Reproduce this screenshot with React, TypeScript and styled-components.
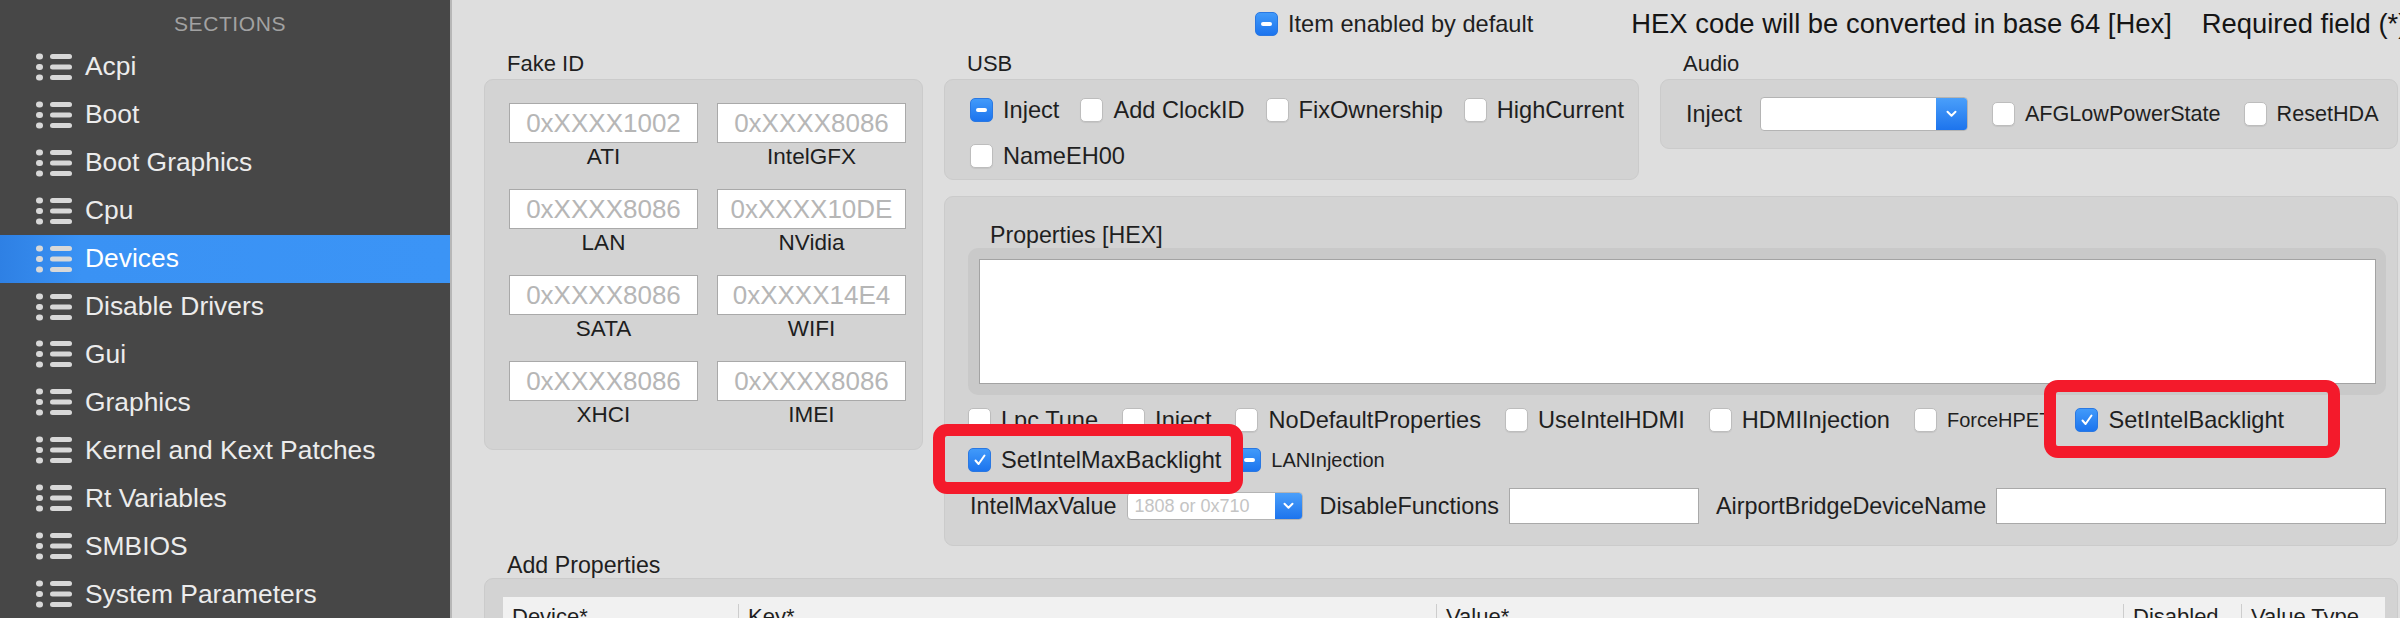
import React from "react";
import styled, { createGlobalStyle, css } from "styled-components";

const Global = createGlobalStyle`
  html, body { margin: 0; padding: 0; width: 2400px; height: 618px; overflow: hidden; }
  body { font-family: "Liberation Sans", Arial, sans-serif; background: #dedede; color: #1f1f1f; }
  #root { width: 2400px; height: 618px; }
  * { box-sizing: border-box; }
`;

const Window = styled.div`
  display: flex;
  width: 2400px;
  height: 618px;
  overflow: hidden;
`;

/* ---------- Sidebar ---------- */
const Sidebar = styled.nav`
  flex: 0 0 452px;
  background: #474747;
  border-right: 2px solid #b7b7b7;
  display: flex;
  flex-direction: column;
`;

const SidebarHeader = styled.div`
  height: 43px;
  padding: 5px 0 0 10px;
  display: flex;
  align-items: center;
  justify-content: center;
  font-size: 21px;
  letter-spacing: 0.6px;
  color: #a2a2a2;
`;

const SidebarItem = styled.div<{ $active?: boolean }>`
  height: 48px;
  display: flex;
  align-items: center;
  gap: 13px;
  padding-left: 36px;
  font-size: 26.4px;
  color: #ececec;
  white-space: nowrap;
  ${({ $active }) =>
    $active &&
    css`
      background: linear-gradient(90deg, #2e80e4 0%, #3a92f4 18%, #3b94f6 100%);
      color: #ffffff;
    `}
`;

const ListIcon = () => (
  <svg width="36" height="28" viewBox="0 0 36 28" fill="#d8d8d8">
    <rect x="0" y="0.5" width="7" height="6" rx="3" />
    <rect x="0" y="11" width="7" height="6" rx="3" />
    <rect x="0" y="21.5" width="7" height="6" rx="3" />
    <rect x="14" y="1" width="22" height="5" rx="2.5" />
    <rect x="14" y="11.5" width="22" height="5" rx="2.5" />
    <rect x="14" y="22" width="22" height="5" rx="2.5" />
  </svg>
);

/* ---------- Main ---------- */
const Main = styled.main`
  flex: 1 1 auto;
  min-width: 0;
  display: flex;
  flex-direction: column;
  overflow: hidden;
  background: #dedede;
`;

const TopBar = styled.div`
  height: 48px;
  flex: 0 0 48px;
  display: flex;
  align-items: center;
  padding-left: 803px;
  white-space: nowrap;
`;

const Note = styled.span<{ $gap: number }>`
  margin-left: ${({ $gap }) => $gap}px;
  font-size: 27.4px;
  color: #151515;
`;

const Content = styled.div`
  display: grid;
  grid-template-columns: 439px 1fr;
  column-gap: 21px;
  padding: 0 2px 0 32px;
`;

const Group = styled.section<{ $basis?: number }>`
  display: flex;
  flex-direction: column;
  min-width: 0;
  ${({ $basis }) =>
    $basis
      ? css`
          flex: 0 0 ${$basis}px;
        `
      : css`
          flex: 1 1 0;
        `}
`;

const GroupTitle = styled.div`
  height: 31px;
  line-height: 31px;
  padding-left: 23px;
  font-size: 22px;
  color: #1f1f1f;
`;

const Panel = styled.div`
  background: #d3d3d3;
  border: 1px solid #cbcbcb;
  border-radius: 9px;
`;

/* Fake ID */
const FakeGrid = styled(Panel)`
  height: 371px;
  padding: 23px 0 0 24px;
  display: grid;
  grid-template-columns: 189px 189px;
  grid-auto-rows: 68px;
  column-gap: 19px;
  row-gap: 18px;
`;

const FakeCell = styled.div`
  display: flex;
  flex-direction: column;
  align-items: center;
`;

const HexField = styled.div`
  width: 189px;
  height: 40px;
  background: #ffffff;
  border: 1px solid #a9a9a9;
  display: flex;
  align-items: center;
  justify-content: center;
  font-size: 26px;
  color: #b6b6b6;
`;

const FieldCaption = styled.div`
  line-height: 28px;
  font-size: 22.5px;
  color: #1e1e1e;
`;

/* Right column */
const RightCol = styled.div`
  display: flex;
  flex-direction: column;
  min-width: 0;
`;

const TopGroups = styled.div`
  display: flex;
  gap: 21px;
`;

const UsbPanel = styled(Panel)`
  height: 101px;
  padding: 18px 0 0 25px;
  display: flex;
  flex-direction: column;
  gap: 22px;
`;

const AudioPanel = styled(Panel)`
  height: 70px;
  padding-left: 25px;
  display: flex;
  align-items: center;
  white-space: nowrap;
  overflow: hidden;
`;

const Row = styled.div<{ $gap: number; $top?: number; $h?: number; $ml?: number }>`
  display: flex;
  align-items: center;
  gap: ${({ $gap }) => $gap}px;
  margin-top: ${({ $top }) => $top ?? 0}px;
  margin-left: ${({ $ml }) => $ml ?? 0}px;
  height: ${({ $h }) => $h ?? 24}px;
  white-space: nowrap;
`;

const PropsPanel = styled(Panel)`
  margin-top: 16px;
  height: 350px;
  padding: 0 11px 0 23px;
  display: flex;
  flex-direction: column;
`;

const PropsTitle = styled.div`
  padding: 25px 0 0 22px;
  line-height: 26px;
  font-size: 23.2px;
  color: #1f1f1f;
`;

const HexFrame = styled.div`
  height: 147px;
  background: #c9c9c9;
  border-radius: 10px;
  padding: 11px 10px 11px 11px;
`;

const HexArea = styled.div`
  width: 100%;
  height: 100%;
  background: #ffffff;
  border: 1px solid #a3a3a3;
`;

/* Check boxes */
type CheckState = "off" | "on" | "mixed";

const Box = styled.span<{ $state: CheckState }>`
  flex: 0 0 auto;
  width: 23px;
  height: 24px;
  border-radius: 5px;
  display: inline-flex;
  align-items: center;
  justify-content: center;
  ${({ $state }) =>
    $state === "off"
      ? css`
          background: #ffffff;
          border: 1px solid #bdbdbd;
          box-shadow: 0 1px 1px rgba(0, 0, 0, 0.07);
        `
      : css`
          background: linear-gradient(#419afa, #1c74ee);
          border: 1px solid #2a78e2;
        `}
`;

const Dash = styled.span`
  width: 11px;
  height: 4px;
  border-radius: 2px;
  background: #ffffff;
`;

const CheckLabel = styled.label<{ $size?: number }>`
  position: relative;
  display: inline-flex;
  align-items: center;
  gap: 10px;
  font-size: ${({ $size }) => $size ?? 23.6}px;
  color: #1f1f1f;
  white-space: nowrap;
`;

const RedMark = styled.span<{ $l: number; $t: number; $w: number; $h: number }>`
  position: absolute;
  left: ${({ $l }) => $l}px;
  top: ${({ $t }) => $t}px;
  width: ${({ $w }) => $w}px;
  height: ${({ $h }) => $h}px;
  border: 12px solid #f41a2b;
  border-radius: 14px;
  z-index: 5;
  pointer-events: none;
`;

const Check = ({
  state = "off",
  children,
  size,
  mark,
}: {
  state?: CheckState;
  children: React.ReactNode;
  size?: number;
  mark?: { l: number; t: number; w: number; h: number };
}) => (
  <CheckLabel $size={size}>
    <Box $state={state}>
      {state === "mixed" && <Dash />}
      {state === "on" && (
        <svg width="14" height="14" viewBox="0 0 14 14">
          <path d="M2.5 7.5 L5.6 11 L11.5 2.5" stroke="#fff" strokeWidth="2" fill="none" strokeLinecap="round" strokeLinejoin="round" />
        </svg>
      )}
    </Box>
    {children}
    {mark && <RedMark $l={mark.l} $t={mark.t} $w={mark.w} $h={mark.h} />}
  </CheckLabel>
);

/* Inputs */
const FieldLabel = styled.span<{ $ml?: number }>`
  font-size: 23.4px;
  color: #1f1f1f;
  margin-left: ${({ $ml }) => $ml ?? 0}px;
  white-space: nowrap;
`;

const Combo = styled.div<{ $w: number; $h: number; $ml: number }>`
  flex: 0 0 auto;
  width: ${({ $w }) => $w}px;
  height: ${({ $h }) => $h}px;
  margin-left: ${({ $ml }) => $ml}px;
  display: flex;
  background: #ffffff;
  border: 1px solid #b4b4b4;
  border-radius: 4px;
  overflow: hidden;
`;

const ComboText = styled.span`
  flex: 1;
  display: flex;
  align-items: center;
  padding-left: 7px;
  font-size: 18px;
  color: #c4c4c4;
`;

const ComboButton = styled.span<{ $w: number }>`
  flex: 0 0 ${({ $w }) => $w}px;
  display: flex;
  align-items: center;
  justify-content: center;
  background: linear-gradient(#4a9ffa, #1d74ed);
`;

const Chevron = () => (
  <svg width="11" height="8" viewBox="0 0 11 8">
    <path d="M1.5 1.8 L5.5 5.8 L9.5 1.8" stroke="#fff" strokeWidth="2" fill="none" strokeLinecap="round" strokeLinejoin="round" />
  </svg>
);

const TextInput = styled.div<{ $w?: number; $ml: number }>`
  height: 36px;
  margin-left: ${({ $ml }) => $ml}px;
  background: #ffffff;
  border: 1px solid #a9a9a9;
  ${({ $w }) =>
    $w
      ? css`
          flex: 0 0 ${$w}px;
        `
      : css`
          flex: 1 1 auto;
        `}
`;

/* Add Properties */
const AddGroup = styled.section`
  grid-column: 1 / -1;
  display: flex;
  flex-direction: column;
`;

const AddTitle = styled.div`
  height: 32px;
  padding: 6px 0 0 23px;
  line-height: 26px;
  font-size: 23.2px;
  color: #1f1f1f;
`;

const AddPanel = styled(Panel)`
  height: 200px;
  padding: 18px 12px 0 18px;
`;

const Table = styled.div`
  display: grid;
  grid-template-columns: 235px 698px 687px 118px 1fr;
  background: #f1f1f1;
  height: 120px;
  align-content: start;
`;

const HeadCell = styled.div<{ $first?: boolean }>`
  margin-top: 7px;
  height: 34px;
  padding-left: 9px;
  line-height: 26px;
  font-size: 22px;
  color: #1f1f1f;
  white-space: nowrap;
  overflow: hidden;
  ${({ $first }) =>
    !$first &&
    css`
      border-left: 1px solid #cdcdcd;
    `}
`;

const sections = [
  "Acpi",
  "Boot",
  "Boot Graphics",
  "Cpu",
  "Devices",
  "Disable Drivers",
  "Gui",
  "Graphics",
  "Kernel and Kext Patches",
  "Rt Variables",
  "SMBIOS",
  "System Parameters",
];

const fakeIds: [string, string][] = [
  ["0xXXXX1002", "ATI"],
  ["0xXXXX8086", "IntelGFX"],
  ["0xXXXX8086", "LAN"],
  ["0xXXXX10DE", "NVidia"],
  ["0xXXXX8086", "SATA"],
  ["0xXXXX14E4", "WIFI"],
  ["0xXXXX8086", "XHCI"],
  ["0xXXXX8086", "IMEI"],
];

export default function App() {
  return (
    <>
      <Global />
      <Window>
        <Sidebar>
          <SidebarHeader>SECTIONS</SidebarHeader>
          {sections.map((s) => (
            <SidebarItem key={s} $active={s === "Devices"}>
              <ListIcon />
              {s}
            </SidebarItem>
          ))}
        </Sidebar>

        <Main>
          <TopBar>
            <Check state="mixed">Item enabled by default</Check>
            <Note $gap={98}>HEX code will be converted in base 64 [Hex]</Note>
            <Note $gap={30}>Required field (*)</Note>
          </TopBar>

          <Content>
            <Group $basis={439}>
              <GroupTitle>Fake ID</GroupTitle>
              <FakeGrid>
                {fakeIds.map(([ph, label], i) => (
                  <FakeCell key={i}>
                    <HexField>{ph}</HexField>
                    <FieldCaption>{label}</FieldCaption>
                  </FakeCell>
                ))}
              </FakeGrid>
            </Group>

            <RightCol>
              <TopGroups>
                <Group $basis={695}>
                  <GroupTitle>USB</GroupTitle>
                  <UsbPanel>
                    <Row $gap={21}>
                      <Check state="mixed">Inject</Check>
                      <Check>Add ClockID</Check>
                      <Check>FixOwnership</Check>
                      <Check>HighCurrent</Check>
                    </Row>
                    <Row $gap={21}>
                      <Check>NameEH00</Check>
                    </Row>
                  </UsbPanel>
                </Group>
                <Group>
                  <GroupTitle>Audio</GroupTitle>
                  <AudioPanel>
                    <FieldLabel>Inject</FieldLabel>
                    <Combo $w={208} $h={34} $ml={18}>
                      <ComboText />
                      <ComboButton $w={31}>
                        <Chevron />
                      </ComboButton>
                    </Combo>
                    <Row $gap={23} $ml={24}>
                      <Check size={21.6}>AFGLowPowerState</Check>
                      <Check size={21.6}>ResetHDA</Check>
                    </Row>
                  </AudioPanel>
                </Group>
              </TopGroups>

              <PropsPanel>
                <PropsTitle>Properties [HEX]</PropsTitle>
                <HexFrame>
                  <HexArea />
                </HexFrame>
                <Row $gap={24} $top={13}>
                  <Check>Lpc Tune</Check>
                  <Check>Inject</Check>
                  <Check>NoDefaultProperties</Check>
                  <Check>UseIntelHDMI</Check>
                  <Check>HDMIInjection</Check>
                  <Check size={20}>ForceHPET</Check>
                  <Check state="on" mark={{ l: -31, t: -27, w: 296, h: 78 }}>
                    SetIntelBacklight
                  </Check>
                </Row>
                <Row $gap={17} $top={16}>
                  <Check state="on" mark={{ l: -35, t: -23, w: 310, h: 70 }}>
                    SetIntelMaxBacklight
                  </Check>
                  <Check state="mixed" size={20}>
                    LANInjection
                  </Check>
                </Row>
                <Row $gap={0} $top={16} $h={36}>
                  <FieldLabel $ml={2}>IntelMaxValue</FieldLabel>
                  <Combo $w={176} $h={28} $ml={10}>
                    <ComboText>1808 or 0x710</ComboText>
                    <ComboButton $w={27}>
                      <Chevron />
                    </ComboButton>
                  </Combo>
                  <FieldLabel $ml={17}>DisableFunctions</FieldLabel>
                  <TextInput $w={190} $ml={10} />
                  <FieldLabel $ml={17}>AirportBridgeDeviceName</FieldLabel>
                  <TextInput $ml={10} />
                </Row>
              </PropsPanel>
            </RightCol>

            <AddGroup>
              <AddTitle>Add Properties</AddTitle>
              <AddPanel>
                <Table>
                  <HeadCell $first>Device*</HeadCell>
                  <HeadCell>Key*</HeadCell>
                  <HeadCell>Value*</HeadCell>
                  <HeadCell>Disabled</HeadCell>
                  <HeadCell>Value Type</HeadCell>
                </Table>
              </AddPanel>
            </AddGroup>
          </Content>
        </Main>
      </Window>
    </>
  );
}
